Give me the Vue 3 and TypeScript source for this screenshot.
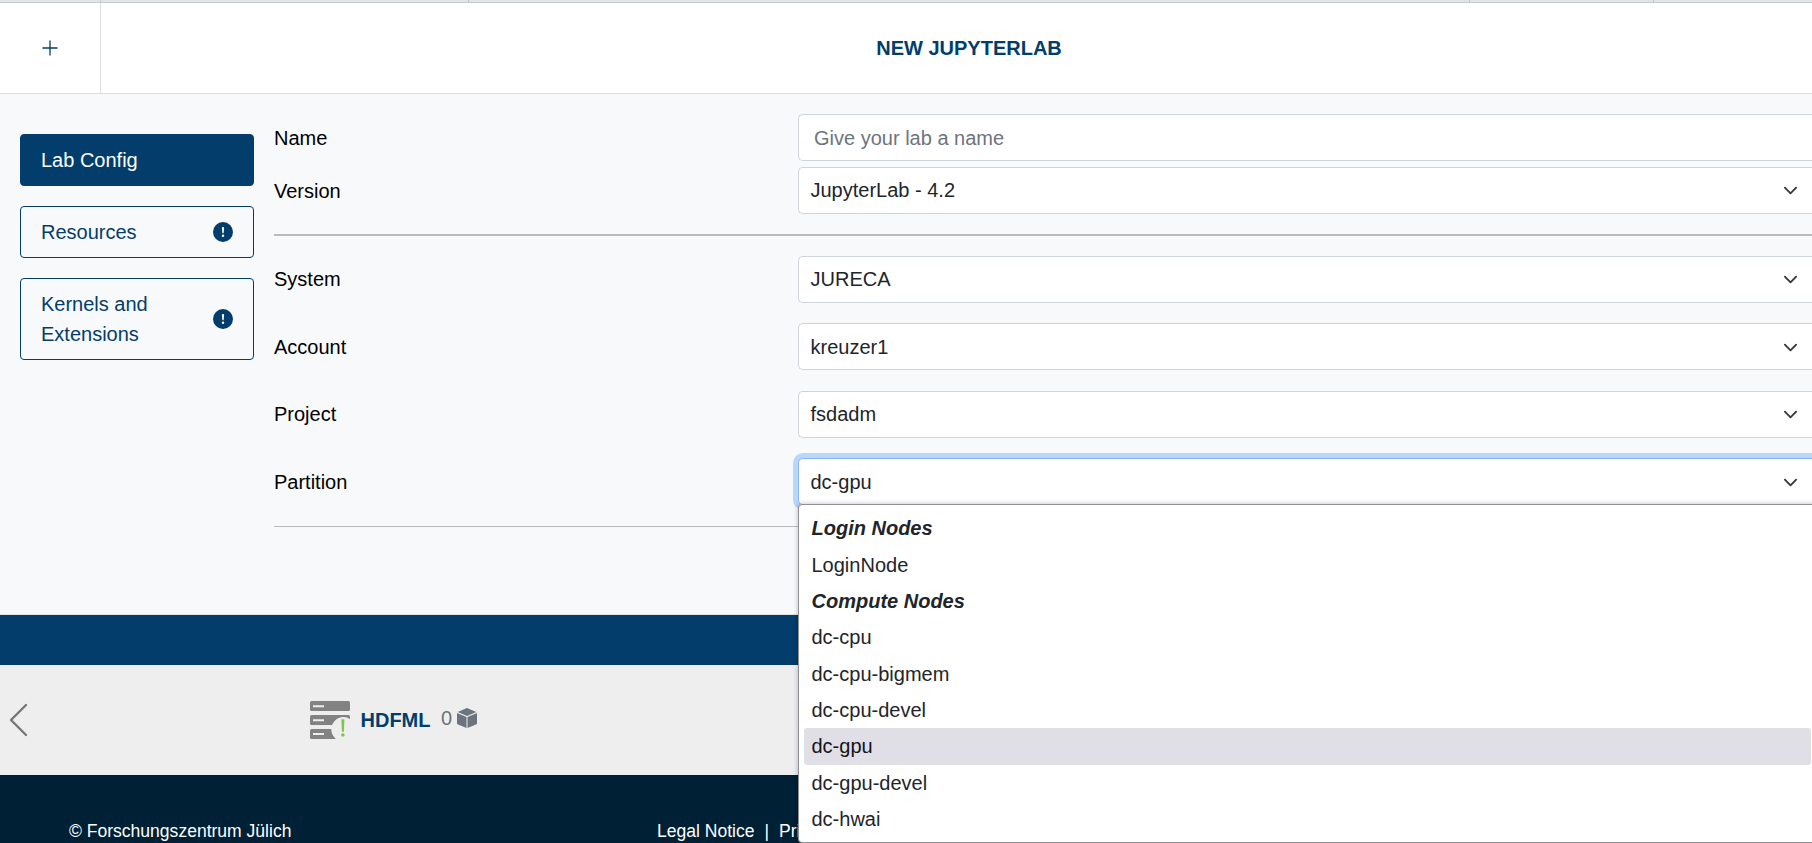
<script setup lang="ts">
import { ref } from 'vue'

interface Tab { label: string; warn: boolean }
interface Field { label: string; value: string }
interface Option { text: string; group?: boolean }

const activeTab = ref('Lab Config')
const labName = ref('')
const partition = ref('dc-gpu')

const tabs: Tab[] = [
  { label: 'Lab Config', warn: false },
  { label: 'Resources', warn: true },
  { label: 'Kernels and Extensions', warn: true },
]
const systemFields: Field[] = [
  { label: 'System', value: 'JURECA' },
  { label: 'Account', value: 'kreuzer1' },
  { label: 'Project', value: 'fsdadm' },
]
const options: Option[] = [
  { text: 'Login Nodes', group: true },
  { text: 'LoginNode' },
  { text: 'Compute Nodes', group: true },
  { text: 'dc-cpu' },
  { text: 'dc-cpu-bigmem' },
  { text: 'dc-cpu-devel' },
  { text: 'dc-gpu' },
  { text: 'dc-gpu-devel' },
  { text: 'dc-hwai' },
]
function choose(o: Option) {
  if (!o.group) partition.value = o.text
}
</script>

<template>
  <div class="page">
    <div class="strip"><i></i><i></i><i></i><i></i></div>
    <header class="head">
      <div class="add">
        <svg width="16" height="16" viewBox="0 0 16 16"><path d="M8 .5v15M.5 8h15" stroke="#023d6b" stroke-width="1.3" fill="none" /></svg>
      </div>
      <h1>NEW JUPYTERLAB</h1>
    </header>

    <main class="body">
      <nav class="tabs">
        <button v-for="t in tabs" :key="t.label" class="tab" :class="{ active: t.label === activeTab }" @click="activeTab = t.label">
          <span>{{ t.label }}</span>
          <svg v-if="t.warn" width="20" height="20" viewBox="0 0 16 16" fill="#023d6b">
            <path d="M16 8A8 8 0 1 1 0 8a8 8 0 0 1 16 0M8 4a.905.905 0 0 0-.9.995l.35 3.507a.552.552 0 0 0 1.1 0l.35-3.507A.905.905 0 0 0 8 4m.002 6a1 1 0 1 0 0 2 1 1 0 0 0 0-2" />
          </svg>
        </button>
      </nav>
      <section class="form">
        <div class="row name">
          <label>Name</label>
          <input v-model="labName" class="field" placeholder="Give your lab a name" />
        </div>
        <div class="row version">
          <label>Version</label>
          <div class="field select">
            <span>JupyterLab - 4.2</span>
            <svg class="chev" viewBox="0 0 16 16"><path d="m2 5 6 6 6-6" /></svg>
          </div>
        </div>
        <hr class="thick" />
        <div v-for="f in systemFields" :key="f.label" class="row sys">
          <label>{{ f.label }}</label>
          <div class="field select">
            <span>{{ f.value }}</span>
            <svg class="chev" viewBox="0 0 16 16"><path d="m2 5 6 6 6-6" /></svg>
          </div>
        </div>
        <div class="row sys">
          <label>Partition</label>
          <div class="anchor">
            <div class="field select focus">
              <span>{{ partition }}</span>
              <svg class="chev" viewBox="0 0 16 16"><path d="m2 5 6 6 6-6" /></svg>
            </div>
            <ul class="menu">
              <li v-for="o in options" :key="o.text" :class="{ group: o.group, on: !o.group && o.text === partition }" @click="choose(o)">{{ o.text }}</li>
            </ul>
          </div>
        </div>
        <hr />
      </section>
    </main>

    <div class="bar"></div>
    <div class="systems">
      <svg class="prev" width="20" height="36" viewBox="0 0 20 36"><path d="M18 3 3 18l15 15" fill="none" stroke="#777" stroke-width="2.4" stroke-linecap="round" stroke-linejoin="round" /></svg>
      <div class="system">
        <svg width="40" height="38" viewBox="0 0 40 38">
          <g fill="#828282">
            <rect width="40" height="10" rx="1.5" />
            <rect y="14" width="40" height="10" rx="1.5" />
            <rect y="28" width="40" height="10" rx="1.5" />
          </g>
          <path d="M3 5.2h11M3 19.2h11M3 33h11" stroke="#eee" stroke-width="2" />
          <circle cx="33.5" cy="28.3" r="12.2" fill="#eee" />
          <path d="M31.4 18.2h3l-.5 12.5h-2z" fill="#7ac943" />
          <circle cx="32.9" cy="34" r="1.8" fill="#7ac943" />
        </svg>
        <strong>HDFML</strong>
        <span class="count">0</span>
        <svg class="cube" width="20" height="20" viewBox="0 0 20 20" fill="#6c757d">
          <path d="M10 0l9.3 3.9L10 7.9.7 3.9zM0 5l9.5 4.1V20L.5 16.3a.8.8 0 0 1-.5-.7zM20 5l-9.5 4.1V20l9-3.7a.8.8 0 0 0 .5-.7z" />
        </svg>
      </div>
    </div>
    <footer class="foot">
      <span>© Forschungszentrum Jülich</span>
      <div class="links"><a>Legal Notice</a><i>|</i><a>Pri</a></div>
    </footer>
  </div>
</template>

<style>
body { margin: 0; }
</style>

<style scoped>
* { box-sizing: border-box; }
.page {
  width: 1812px; height: 843px; overflow: hidden; position: relative;
  display: flex; flex-direction: column;
  font: 20px/30px "Liberation Sans", Arial, sans-serif; color: #212529; background: #f8f9fb;
}
.strip { flex: none; height: 3px; background: #e2e4e6; border-bottom: 1px solid #c9cccf; display: grid; grid-template-columns: 100px 368px 1001px 184px; }
.strip i { border-right: 1px solid #c4c7ca; margin-right: -1px; }
.head { flex: none; height: 91px; display: flex; background: #fff; border-bottom: 1px solid #dbdddf; }
.add { width: 101px; border-right: 1px solid #dbdde0; display: flex; align-items: center; justify-content: center; }
.head h1 { flex: 1; margin: 0; padding-left: 25px; text-align: center; font-size: 20px; line-height: 90px; font-weight: 700; color: #023d6b; }
.body { flex: none; height: 521px; display: flex; border-bottom: 1px solid #dee2e6; }
.tabs { width: 254px; padding: 40px 0 0 20px; display: flex; flex-direction: column; gap: 20px; }
.tab {
  display: flex; align-items: center; justify-content: space-between; text-align: left;
  width: 234px; padding: 10px 20px; border: 1px solid #023d6b; border-radius: 4px;
  background: transparent; color: #023d6b; font: inherit; line-height: 30px;
}
.tab span { max-width: 120px; }
.tab.active { background: #023d6b; color: #fff; }
.form { flex: 1; padding: 20px 0 0 20px; color: #000; }
.row { display: grid; grid-template-columns: 524px 1fr; align-items: start; }
.row label { line-height: 48px; }
.row.sys label { line-height: 47px; padding-top: .3px; }
.field {
  height: 47px; width: 100%; border: 1px solid #ced4da; border-right: 0; border-radius: 5px 0 0 5px;
  background: #fff; color: #212529; font: inherit; line-height: 47px; outline: none;
}
input.field { padding: 1px 15px 0; }
input.field::placeholder { color: #6c757d; opacity: 1; }
.select { display: flex; align-items: center; justify-content: space-between; padding: .6px 14px 0 11.5px; }
.chev { width: 15px; height: 15px; fill: none; stroke: #343a40; stroke-width: 2; stroke-linecap: round; stroke-linejoin: round; }
.name { height: 53px; }
.version { height: 47px; }
hr { margin: 0; border: 0; height: 1px; background: #babbbd; }
hr.thick { height: 2px; margin: 20px 0 19.9px; }
.sys { height: 67.5px; }
.anchor { position: relative; }
.focus { border-color: #86b7fe; box-shadow: 0 0 0 5px #bbd6fb; }
.menu {
  position: absolute; left: 0; top: 45.6px; width: 1020px; height: 339px; margin: 0; padding: 5.4px 5px 0; list-style: none;
  background: #fff; border: 1px solid #8f8f95; border-radius: 4px; color: #212529; z-index: 2;
  box-shadow: 0 0 5px rgba(0, 0, 0, .25);
}
.menu li { height: 36.33px; line-height: 36px; padding-left: 7.5px; border-radius: 3px; }
.menu .group { font-weight: 700; font-style: italic; }
.menu .on { background: #e0dfe6; width: 1007px; color: #15141a; }
.bar { flex: none; height: 50px; background: #023d6b; }
.systems { flex: none; height: 110px; background: #eee; display: flex; padding-left: 8px; align-items: center; }
.system { margin-left: 282px; display: flex; align-items: center; }
.system strong { margin-left: 10.5px; color: #023d6b; }
.count { margin-left: 10.5px; color: #6c757d; position: relative; top: -2px; }
.cube { margin-left: 5px; position: relative; top: -2px; }
.foot { flex: 1; background: #002035; color: #fff; font-size: 17.55px; line-height: 26px; padding: 43px 0 0 69px; display: flex; align-items: flex-start; }
.foot > span { width: 588px; white-space: nowrap; }
.links { display: flex; white-space: nowrap; }
.links i { font-style: normal; margin: 0 10px; }
</style>
